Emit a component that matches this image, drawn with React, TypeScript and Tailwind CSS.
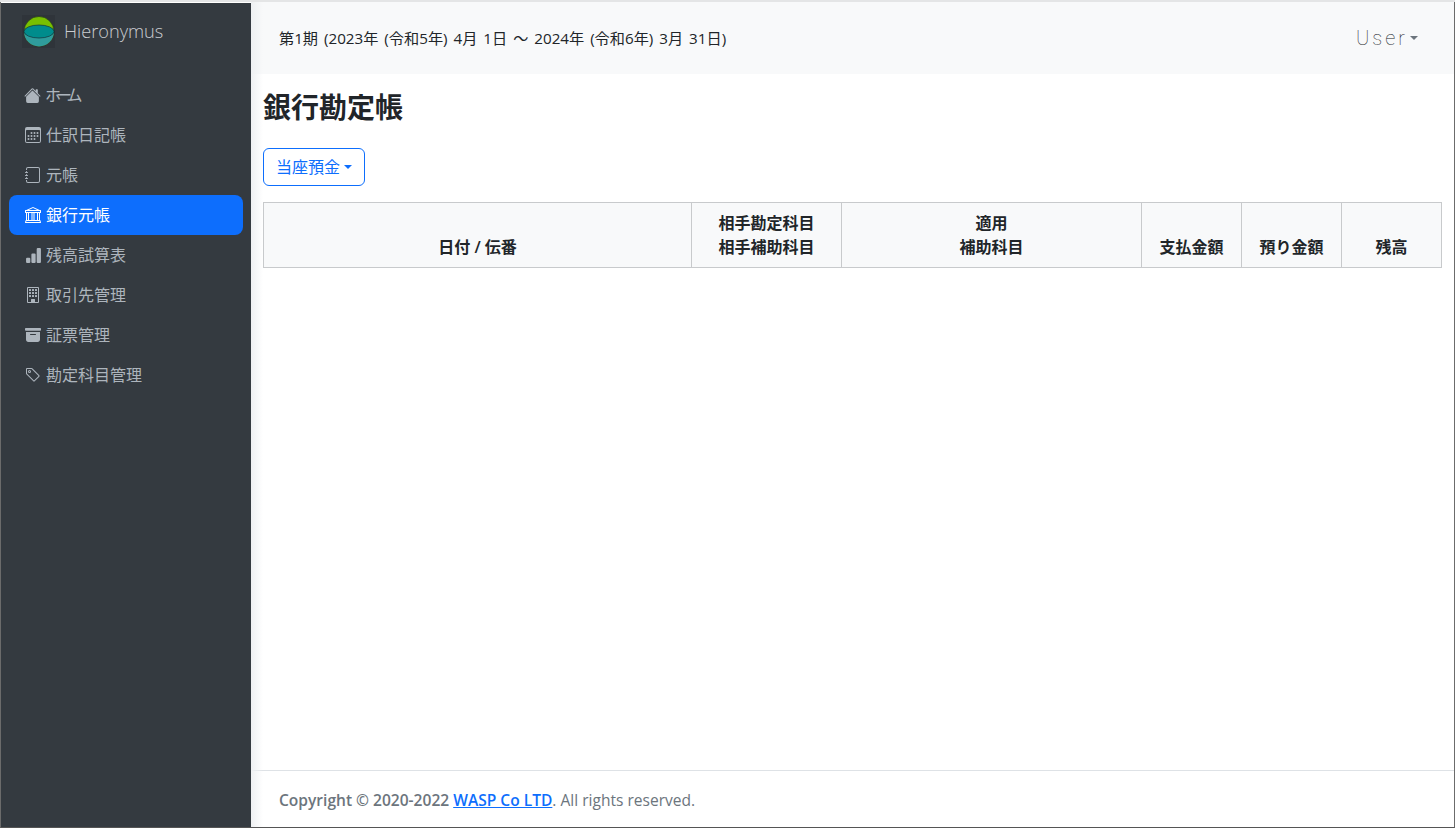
import { BsArchiveFill, BsBank, BsBarChartFill, BsBuilding, BsCalendar3, BsHouseFill, BsJournal, BsTag } from "react-icons/bs";

const navItems = [
  { label: "ホーム", icon: BsHouseFill, iconClass: "w-[17px] h-[17px] -ml-px", labelClass: "tracking-[-5px] -ml-px" },
  { label: "仕訳日記帳", icon: BsCalendar3 },
  { label: "元帳", icon: BsJournal },
  { label: "銀行元帳", icon: BsBank, active: true },
  { label: "残高試算表", icon: BsBarChartFill, iconClass: "w-[17px] h-[17px] -mr-px" },
  { label: "取引先管理", icon: BsBuilding },
  { label: "証票管理", icon: BsArchiveFill },
  { label: "勘定科目管理", icon: BsTag },
];

const Logo = () => (
  <div className="w-[33px] h-[33px] bg-[#2f343a] flex items-center justify-center">
    <svg width="32" height="32" viewBox="0 0 32 32">
      <circle cx="16" cy="15.5" r="15" fill="#78c000" stroke="#1c2b20" strokeWidth="0.6" />
      <path d="M1 15.5a15 15 0 0 0 30 0z" fill="#2f9c9c" />
      <ellipse cx="16" cy="15.5" rx="15" ry="6.5" fill="#008c8c" stroke="#12323a" strokeWidth="0.7" />
    </svg>
  </div>
);

const App = () => {
  return (
    <div className="h-[828px] w-[1455px] overflow-hidden flex flex-col bg-white font-['Open_Sans','Noto_Sans_CJK_JP',sans-serif] text-[#212529]">
      <div className="h-[2px] bg-[#e4e5e6] shrink-0"></div>
      <div className="flex flex-1 min-h-0 border-l border-r border-b border-l-[#6b6b6b] border-r-[#6b6b6b] border-b-[#555]">
        <aside className="w-[250px] shrink-0 bg-[#343a40] border-t border-t-white">
          <div className="flex items-center gap-[9px] pl-[21px] pt-[12px]">
            <Logo />
            <span className="text-[18.2px] font-light text-[#c9ccd0]">Hieronymus</span>
          </div>
          <nav className="flex flex-col px-2 pt-[27px]">
            {navItems.map((item) => {
              const Icon = item.icon;
              return (
                <a
                  key={item.label}
                  href="#"
                  className={`flex items-center gap-[5px] h-10 pl-4 rounded-lg text-base ${item.active ? "bg-[#0d6efd] text-white" : "text-[#adb5bd]"}`}
                >
                  <Icon className={`shrink-0 ${item.iconClass ?? "w-4 h-4"}`} />
                  <span className={item.labelClass}>{item.label}</span>
                </a>
              );
            })}
          </nav>
        </aside>
        <div className="flex-1 min-w-0 flex flex-col relative">
          <div className="absolute left-0 top-0 bottom-0 w-3 bg-gradient-to-r from-[#eef0f2] to-transparent"></div>
          <header className="h-[72px] shrink-0 bg-[#f8f9fa] flex items-center justify-between pl-7 pr-9">
            <span className="text-[15.2px] [word-spacing:2px]">第1期 (2023年 (令和5年) 4月 1日 ～ 2024年 (令和6年) 3月 31日)</span>
            <span className="flex items-center text-[#212529] text-[20px] font-['Roboto'] font-thin tracking-[3px]">
              User
              <span className="ml-0.5 border-x-[4px] border-x-transparent border-t-[4px] border-t-[#6c757d]"></span>
            </span>
          </header>
          <main className="flex-1 px-3">
            <h1 className="mt-[13px] text-[28px] leading-[40px] font-bold">銀行勘定帳</h1>
            <button className="mt-[21px] h-[38px] w-[102px] flex items-center justify-center gap-1 rounded-md border border-[#0d6efd] text-[#0d6efd] text-base">
              当座預金
              <span className="border-x-[4px] border-x-transparent border-t-[4px] border-t-[#0d6efd]"></span>
            </button>
            <table className="mt-4 w-[1178px] table-fixed border-collapse text-base text-center">
              <thead>
                <tr className="bg-[#f8f9fa] align-bottom leading-6">
                  <th className="border border-[#c8cacc] py-2 w-[428px] font-semibold">日付 / 伝番</th>
                  <th className="border border-[#c8cacc] py-2 w-[150px] font-semibold">相手勘定科目<br />相手補助科目</th>
                  <th className="border border-[#c8cacc] py-2 w-[300px] font-semibold">適用<br />補助科目</th>
                  <th className="border border-[#c8cacc] py-2 w-[100px] font-semibold">支払金額</th>
                  <th className="border border-[#c8cacc] py-2 w-[100px] font-semibold">預り金額</th>
                  <th className="border border-[#c8cacc] py-2 w-[100px] font-semibold">残高</th>
                </tr>
              </thead>
            </table>
          </main>
          <footer className="h-[57px] shrink-0 border-t border-[#dee2e6] flex items-center pl-7 pt-1 text-[15.55px] text-[#6c757d]">
            <span><span className="font-semibold">Copyright © 2020-2022 <a href="#" className="text-[#0d6efd] underline">WASP Co LTD</a></span>. All rights reserved.</span>
          </footer>
        </div>
      </div>
    </div>
  );
};

export default App;
